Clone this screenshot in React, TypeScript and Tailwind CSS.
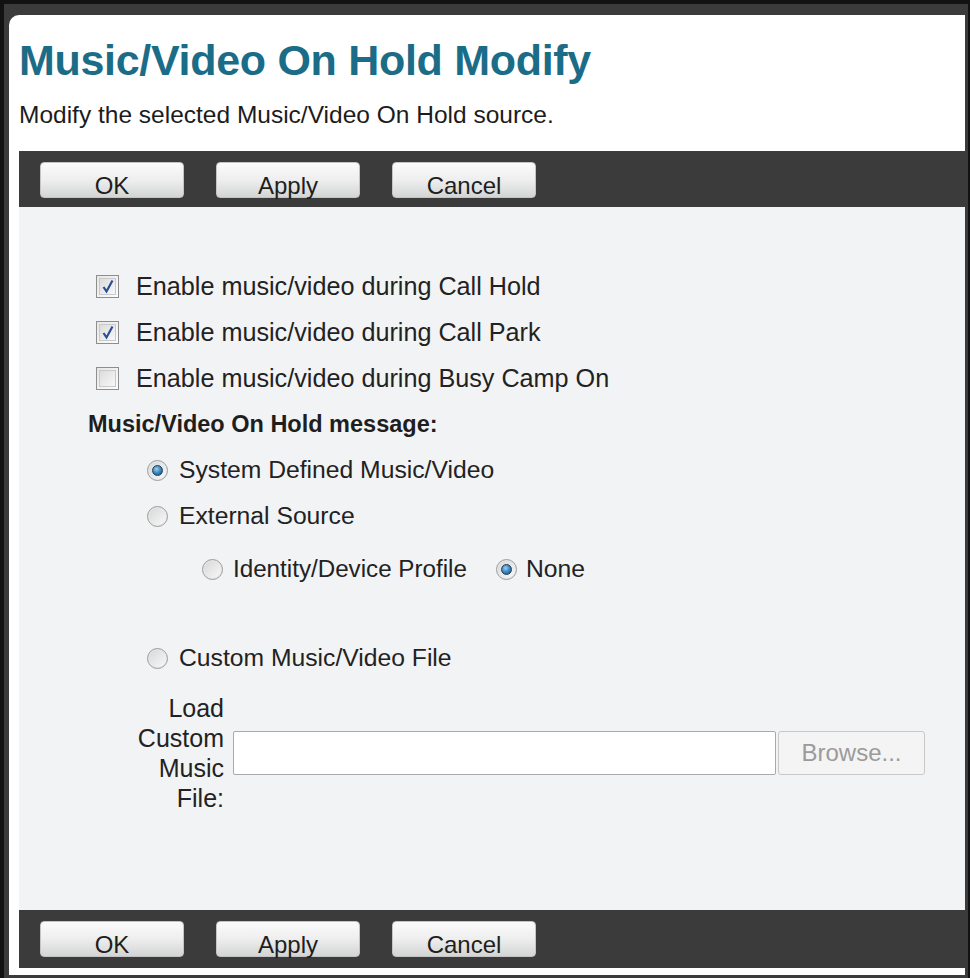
import React from "react";

const font = { fontFamily: '"Liberation Sans", Arial, Helvetica, sans-serif' };

function ActionBar({ h }: { h: string }) {
  return (
    <div className={`${h} flex gap-[32px] bg-[#3a3b3a] pl-[21px] pt-[11px]`}>
      {["OK", "Apply", "Cancel"].map((b) => (
        <button
          key={b}
          className="flex h-[36px] w-[144px] items-end justify-center rounded-[4px] border border-[#c4c4c4] bg-gradient-to-b from-[#fbfbfb] via-[#eeeeee] to-[#d3d5d5] text-[24px] leading-[22px] text-[#1e1e1e]"
        >
          {b}
        </button>
      ))}
    </div>
  );
}

function Checkbox({ checked }: { checked?: boolean }) {
  return (
    <span className="flex h-[23px] w-[23px] shrink-0 items-center justify-center border border-[#8e8e8e] bg-gradient-to-br from-[#e6e6e6] to-[#fdfdfd] p-[2px]">
      <span className="flex h-full w-full items-center justify-center border border-[#c9c9c9] bg-gradient-to-br from-[#dcdcdc] to-[#f8f8f8]">
        {checked && (
          <svg width="14" height="15" viewBox="0 0 14 15">
            <path d="M2.5 8 L5.5 12.5 L11.5 1.5" fill="none" stroke="#2c4d96" strokeWidth="2.2" />
          </svg>
        )}
      </span>
    </span>
  );
}

function Radio({ checked }: { checked?: boolean }) {
  return (
    <span className="flex h-[21px] w-[21px] shrink-0 items-center justify-center rounded-full border border-[#9b9b9b] bg-gradient-to-br from-[#d6d6d6] to-[#fafafa] shadow-[inset_0_0_0_1px_#e8e8e8]">
      {checked && (
        <span className="h-[11px] w-[11px] rounded-full border border-[#1d3c58] bg-[radial-gradient(circle_at_40%_35%,#9fd0f0_0%,#3f8cc2_45%,#174a72_100%)]" />
      )}
    </span>
  );
}

export default function App() {
  const txt = "text-[24.7px] leading-[28px] text-[#222]";
  return (
    <div
      style={font}
      className="h-[978px] w-[970px] overflow-hidden border-t-[4px] border-l-[4px] border-r-[2px] border-[#121212] bg-[#3a3b3a] pl-[5px] pr-[3px] pt-[11px]"
    >
      <div className="h-[960px] rounded-tl-[10px] bg-white pl-[10px]">
        <div className="pt-[20px]">
          <h1 className="text-[43px] font-bold leading-[50px] tracking-[-0.3px] text-[#1b6c87]">
            Music/Video On Hold Modify
          </h1>
          <p className="mt-[16px] text-[24.5px] leading-[28px] text-[#1c1c1c]">
            Modify the selected Music/Video On Hold source.
          </p>
        </div>

        <div className="mt-[22px]">
          <ActionBar h="h-[56px]" />
        </div>

        <div className="h-[703px] bg-[#f2f3f5] pt-[56px]">
          {[
            { label: "Enable music/video during Call Hold", checked: true },
            { label: "Enable music/video during Call Park", checked: true },
            { label: "Enable music/video during Busy Camp On", checked: false },
          ].map((c) => (
            <div key={c.label} className="flex h-[46px] items-center gap-[17px] pl-[77px]">
              <Checkbox checked={c.checked} />
              <span className="text-[25.2px] leading-[28px] text-[#222]">{c.label}</span>
            </div>
          ))}

          <div className="flex h-[46px] items-center pl-[69px]">
            <span className="text-[23.5px] font-bold leading-[28px] text-[#1e1e1e]">
              Music/Video On Hold message:
            </span>
          </div>

          <div className="flex h-[46px] items-center gap-[11px] pl-[128px]">
            <Radio checked />
            <span className={txt}>System Defined Music/Video</span>
          </div>
          <div className="flex h-[46px] items-center gap-[11px] pl-[128px]">
            <Radio />
            <span className={txt}>External Source</span>
          </div>
          <div className="mt-[7px] flex h-[46px] items-center pl-[183px]">
            <Radio />
            <span className="ml-[10px] text-[24.2px] leading-[28px] text-[#222]">Identity/Device Profile</span>
            <span className="ml-[29px]">
              <Radio checked />
            </span>
            <span className={`${txt} ml-[9px]`}>None</span>
          </div>

          <div className="mt-[43px] flex h-[46px] items-center gap-[11px] pl-[128px]">
            <Radio />
            <span className={txt}>Custom Music/Video File</span>
          </div>

          <div className="mt-[12px] flex items-center">
            <div className="w-[205px] text-right text-[25px] leading-[30px] text-[#222]">
              Load
              <br />
              Custom
              <br />
              Music
              <br />
              File:
            </div>
            <input
              type="text"
              className="ml-[9px] h-[44px] w-[543px] rounded-[2px] border border-[#a9a9a9] bg-white"
            />
            <button
              disabled
              className="ml-[2px] h-[44px] w-[147px] rounded-[3px] border border-[#c8c8c8] bg-[#f4f4f4] text-[24px] text-[#9b9b9b]"
            >
              Browse...
            </button>
          </div>
        </div>

        <ActionBar h="h-[58px]" />
      </div>
    </div>
  );
}
